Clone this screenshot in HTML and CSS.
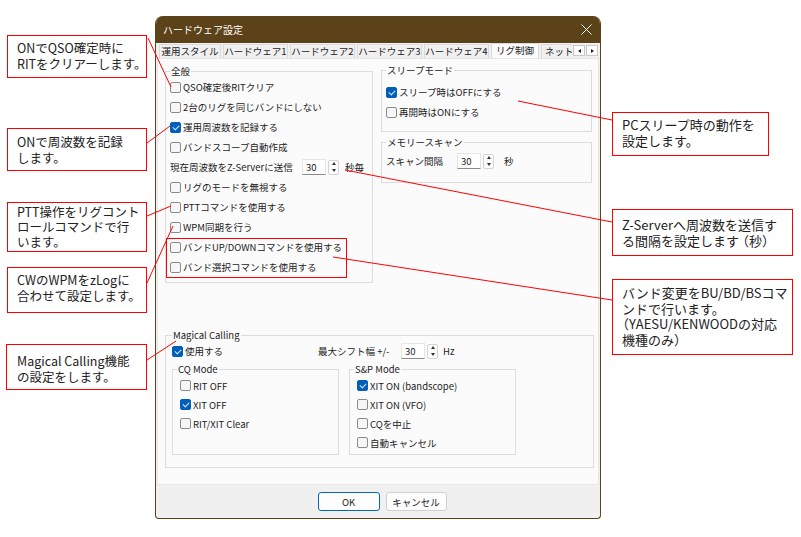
FILE: index.html
```html
<!DOCTYPE html>
<html lang="ja">
<head>
    <meta charset="UTF-8">
    <title>ハードウェア設定</title>
    <link rel="stylesheet" href="styles.css">
</head>
<body>
    <div class="dialog">
        <div class="titlebar">
            <span>ハードウェア設定</span>
            <svg class="close" width="11" height="11" viewBox="0 0 11 11"><path d="M0.5 0.5L10.5 10.5M10.5 0.5L0.5 10.5" stroke="#fff" stroke-width="1"/></svg>
        </div>
        <div class="tabbar">
            <div class="tabs">
                <div class="tab w62">運用スタイル</div>
                <div class="tab">ハードウェア1</div>
                <div class="tab">ハードウェア2</div>
                <div class="tab">ハードウェア3</div>
                <div class="tab">ハードウェア4</div>
                <div class="tab active">リグ制御</div>
                <div class="tab last">ネットワ</div>
            </div>
            <div class="tab-arrows">
                <span class="arrow"><i class="tri-left"></i></span>
                <span class="arrow"><i class="tri-right"></i></span>
            </div>
        </div>
        <div class="page">
            <div class="top-row">
                <fieldset class="group general">
                    <legend>全般</legend>
                    <div class="check"><span class="box"></span>QSO確定後RITクリア</div>
                    <div class="check"><span class="box"></span>2台のリグを同じバンドにしない</div>
                    <div class="check"><span class="box on"></span>運用周波数を記録する</div>
                    <div class="check"><span class="box"></span>バンドスコープ自動作成</div>
                    <div class="check">
                        <span class="fixed w130">現在周波数をZ-Serverに送信</span>
                        <span class="spin"><span class="num">30</span><span class="updown"><i class="up"></i><i class="down"></i></span></span>
                        <span class="unit">秒毎</span>
                    </div>
                    <div class="check"><span class="box"></span>リグのモードを無視する</div>
                    <div class="check"><span class="box"></span>PTTコマンドを使用する</div>
                    <div class="check"><span class="box"></span>WPM同期を行う</div>
                    <div class="check"><span class="box"></span>バンドUP/DOWNコマンドを使用する</div>
                    <div class="check"><span class="box"></span>バンド選択コマンドを使用する</div>
                </fieldset>
                <div class="right-col">
                    <fieldset class="group sleep">
                        <legend>スリープモード</legend>
                        <div class="check"><span class="box on"></span>スリープ時はOFFにする</div>
                        <div class="check"><span class="box"></span>再開時はONにする</div>
                    </fieldset>
                    <fieldset class="group scan">
                        <legend>メモリースキャン</legend>
                        <div class="check">
                            <span class="fixed w69">スキャン間隔</span>
                            <span class="spin"><span class="num">30</span><span class="updown"><i class="up"></i><i class="down"></i></span></span>
                            <span class="unit wide">秒</span>
                        </div>
                    </fieldset>
                </div>
            </div>
            <fieldset class="group magical">
                <legend>Magical Calling</legend>
                <div class="mc-head">
                    <div class="check"><span class="box on"></span>使用する</div>
                    <div class="check">
                        <span class="fixed w81">最大シフト幅 +/-</span>
                        <span class="spin"><span class="num">30</span><span class="updown"><i class="up"></i><i class="down"></i></span></span>
                        <span class="unit tight">Hz</span>
                    </div>
                </div>
                <div class="modes">
                    <fieldset class="group mode">
                        <legend>CQ Mode</legend>
                        <div class="check"><span class="box"></span>RIT OFF</div>
                        <div class="check"><span class="box on"></span>XIT OFF</div>
                        <div class="check"><span class="box"></span>RIT/XIT Clear</div>
                    </fieldset>
                    <fieldset class="group mode">
                        <legend>S&amp;P Mode</legend>
                        <div class="check"><span class="box on"></span>XIT ON (bandscope)</div>
                        <div class="check"><span class="box"></span>XIT ON (VFO)</div>
                        <div class="check"><span class="box"></span>CQを中止</div>
                        <div class="check"><span class="box"></span>自動キャンセル</div>
                    </fieldset>
                </div>
            </fieldset>
        </div>
        <div class="buttons">
            <button class="btn default">OK</button>
            <button class="btn">キャンセル</button>
        </div>
    </div>

    <div class="note n1">ONでQSO確定時に<br>RITをクリアーします。</div>
    <div class="note n2">ONで周波数を記録<br>します。</div>
    <div class="note n3">PTT操作をリグコント<br>ロールコマンドで行<br>います。</div>
    <div class="note n4">CWのWPMをzLogに<br>合わせて設定します。</div>
    <div class="note n5">Magical Calling機能<br>の設定をします。</div>
    <div class="note n6">PCスリープ時の動作を<br>設定します。</div>
    <div class="note n7">Z-Serverへ周波数を送信す<br>る間隔を設定します<span class="paren">（</span>秒）</div>
    <div class="note n8">バンド変更をBU/BD/BSコマ<br>ンドで行います。<br><span class="paren">（</span>YAESU/KENWOODの対応<br>機種のみ）</div>

    <svg class="leaders" width="801" height="537" viewBox="0 0 801 537">
        <g stroke="#f00" stroke-width="1" fill="none">
            <path d="M148 38L171 87"/>
            <path d="M147 143L170 126"/>
            <path d="M147 216L171 206"/>
            <path d="M147 283L173 226"/>
            <path d="M147 360L176 341"/>
            <path d="M518 101L612 120"/>
            <path d="M345 170L612 222"/>
            <path d="M333 257L612 300"/>
            <rect x="166.5" y="238.5" width="180" height="39"/>
        </g>
    </svg>
</body>
</html>
```

FILE: styles.css
```css
* {
    box-sizing: border-box;
}
body {
    margin: 0;
    width: 801px;
    height: 537px;
    position: relative;
    overflow: hidden;
    background: #fff;
    font-family: "Noto Sans CJK JP", "Noto Sans", sans-serif;
    color: #1b1b1b;
}

/* dialog window */
.dialog {
    position: absolute;
    left: 155px;
    top: 16px;
    width: 446px;
    height: 503px;
    display: flex;
    flex-direction: column;
    background: #f0f0f0;
    border: 1px solid #5c4218;
    border-top: none;
    border-radius: 8px 8px 4px 4px;
    overflow: hidden;
    font-size: 9.5px;
}
.titlebar {
    height: 27px;
    flex: none;
    display: flex;
    align-items: center;
    justify-content: space-between;
    padding: 0 8px 0 7px;
    background: #5c4218;
    color: #fff;
    font-size: 10px;
}
.close {
    display: block;
}
.tabbar {
    height: 15px;
    flex: none;
    display: flex;
    align-items: flex-end;
    padding: 0 2px 0 3px;
}
.tabs {
    flex: 1;
    display: flex;
    align-items: flex-end;
    gap: 2px;
    overflow: hidden;
    height: 15px;
}
.tab {
    flex: none;
    width: 65px;
    height: 14px;
    line-height: 13px;
    text-align: center;
    white-space: nowrap;
    background: #f0f0f0;
    border: 1px solid #dadada;
    border-bottom: none;
}
.tab.w62 {
    width: 62px;
}
.tab.active {
    width: 48px;
    height: 15px;
    background: #fbfbfb;
}
.tab.last {
    width: 40px;
    text-align: left;
    padding-left: 3px;
}
.tab-arrows {
    display: flex;
    gap: 1px;
    margin: 0 0 2px 1px;
}
.arrow {
    width: 12px;
    height: 11px;
    display: flex;
    align-items: center;
    justify-content: center;
    background: #fdfdfd;
    border: 1px solid #c8c8c8;
}
.tri-left {
    border-top: 2.5px solid transparent;
    border-bottom: 2.5px solid transparent;
    border-right: 3px solid #222;
}
.tri-right {
    border-top: 2.5px solid transparent;
    border-bottom: 2.5px solid transparent;
    border-left: 3px solid #222;
}

/* tab page */
.page {
    height: 427px;
    flex: none;
    margin: 0 1px;
    padding: 6px 4px 0 7px;
    background: #fbfbfb;
    border: 1px solid #e6e6e6;
}
.top-row {
    display: grid;
    grid-template-columns: 208px 211px;
    column-gap: 8px;
    align-items: start;
}
.right-col {
    display: flex;
    flex-direction: column;
    gap: 4px;
    margin-top: -1px;
}
.group {
    margin: 0;
    min-width: 0;
    border: 1px solid #dcdcdc;
    padding: 0 4px;
}
.group legend {
    padding: 0 1px;
    font-size: 9.5px;
    line-height: 12px;
}
.general {
    height: 218px;
}
.sleep {
    padding-top: 6px;
    padding-bottom: 9px;
}
.scan {
    padding-top: 3px;
    padding-bottom: 11px;
}
.check {
    display: flex;
    align-items: center;
    gap: 2px;
    height: 20px;
    white-space: nowrap;
}
.box {
    flex: none;
    width: 11px;
    height: 11px;
    border: 1px solid #8b8b8b;
    border-radius: 2px;
    background: #f6f6f6;
}
.box.on {
    background: #005fb8;
    border-color: #005fb8;
}
.box.on::after {
    content: "";
    display: block;
    width: 3px;
    height: 5px;
    margin: 1px 0 0 3px;
    border: solid #dbe9f7;
    border-width: 0 1px 1px 0;
    transform: rotate(45deg);
}
.fixed {
    flex: none;
}
.w130 {
    width: 130px;
}
.w69 {
    width: 69px;
}
.w81 {
    width: 81px;
}
.spin {
    display: flex;
    align-items: center;
}
.num {
    width: 24px;
    height: 16px;
    line-height: 14px;
    padding-left: 3px;
    background: #fff;
    border: 1px solid #e5e5e5;
    border-bottom-color: #8a8a8a;
}
.updown {
    width: 11px;
    height: 15px;
    margin-left: 2px;
    display: flex;
    flex-direction: column;
    align-items: center;
    justify-content: space-around;
    background: #fcfcfc;
    border: 1px solid #d4d4d4;
    border-radius: 2px;
}
.up {
    border-left: 2.5px solid transparent;
    border-right: 2.5px solid transparent;
    border-bottom: 3px solid #333;
}
.down {
    border-left: 2.5px solid transparent;
    border-right: 2.5px solid transparent;
    border-top: 3px solid #333;
}
.unit {
    margin-left: 4px;
}
.unit.wide {
    margin-left: 8px;
}
.unit.tight {
    margin-left: 3px;
}

/* magical calling */
.magical {
    margin-top: 46px;
    padding: 0 6px 12px 6px;
}
.mc-head {
    display: grid;
    grid-template-columns: 146px auto;
    margin-bottom: 2px;
}
.modes {
    display: grid;
    grid-template-columns: 167px 167px;
    column-gap: 10px;
}
.mode {
    padding: 1px 6px 2px 7px;
}
.mode legend {
    margin-left: -3px;
}
.mode .check {
    height: 19px;
}

/* bottom buttons */
.buttons {
    flex: 1;
    display: flex;
    justify-content: center;
    align-items: center;
    gap: 6px;
    padding-left: 8px;
}
.btn {
    width: 61px;
    height: 19px;
    padding: 0;
    font: inherit;
    color: #1b1b1b;
    background: #fdfdfd;
    border: 1px solid #d0d0d0;
    border-radius: 3px;
}
.btn.default {
    width: 62px;
    border-color: #0067c0;
}

/* annotations */
.note {
    position: absolute;
    background: #fff;
    border: 1px solid #f00;
    font-size: 12.5px;
    line-height: 16px;
    white-space: nowrap;
    padding-left: 9px;
    color: #222;
}
.paren {
    margin-left: -6px;
}
.n1 { left: 7px; top: 35px; width: 140px; height: 43px; padding-top: 4px; }
.n2 { left: 7px; top: 128px; width: 140px; height: 43px; padding-top: 5px; }
.n3 { left: 7px; top: 202px; width: 140px; height: 50px; padding-top: 1px; line-height: 15px; }
.n4 { left: 7px; top: 267px; width: 140px; height: 46px; padding-top: 4px; }
.n5 { left: 6px; top: 344px; width: 141px; height: 46px; padding-top: 8px; padding-left: 10px; }
.n6 { left: 612px; top: 112px; width: 157px; height: 44px; padding-top: 4px; font-size: 13px; }
.n7 { left: 612px; top: 209px; width: 181px; height: 47px; padding-top: 7px; font-size: 13px; }
.n8 { left: 612px; top: 279px; width: 181px; height: 76px; padding-top: 5px; line-height: 15.5px; font-size: 13px; }
.n7 .paren {
    margin-left: -3px;
}
.leaders {
    position: absolute;
    left: 0;
    top: 0;
    pointer-events: none;
}
```
